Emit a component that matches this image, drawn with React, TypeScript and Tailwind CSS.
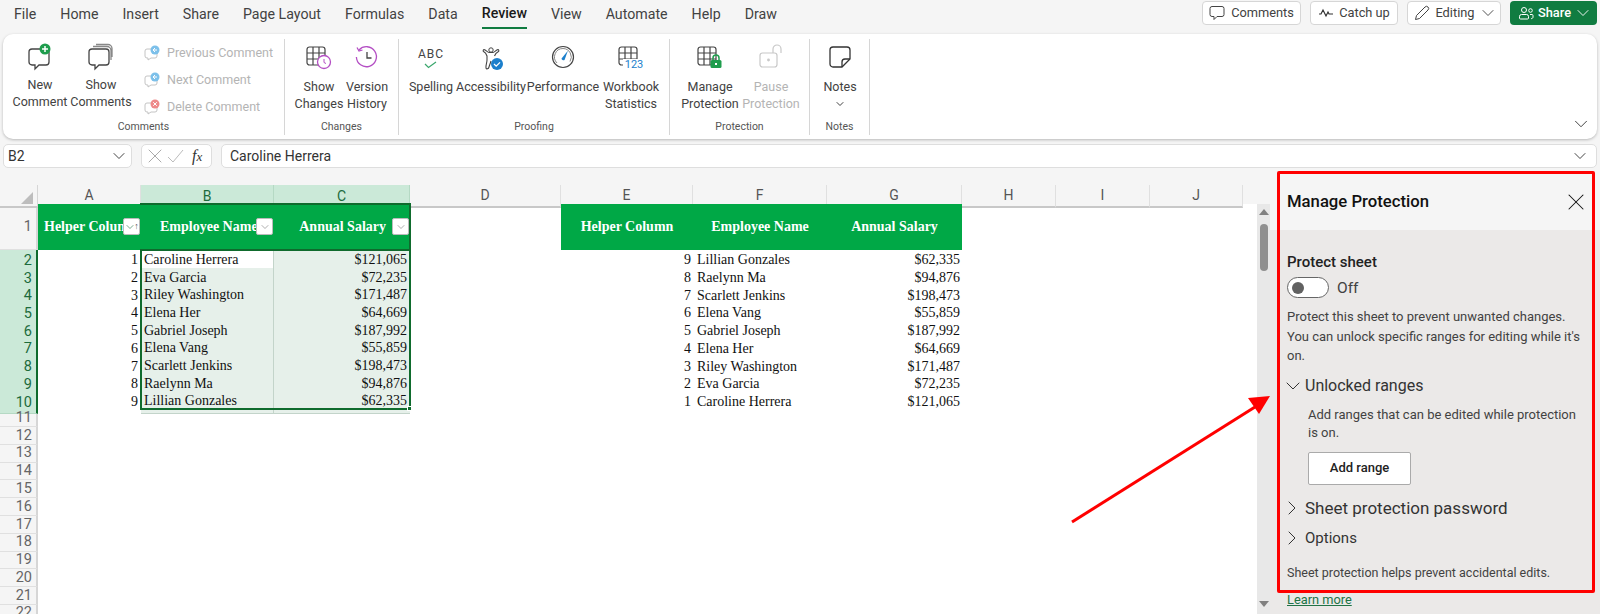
import type { ReactNode } from "react";
import { ChevronDown, ChevronRight, X } from "lucide-react";

const tabs = ["File", "Home", "Insert", "Share", "Page Layout", "Formulas", "Data", "Review", "View", "Automate", "Help", "Draw"];

const colHeaders = [
  { label: "A", sel: false },
  { label: "B", sel: true },
  { label: "C", sel: true },
  { label: "D", sel: false },
  { label: "E", sel: false },
  { label: "F", sel: false },
  { label: "G", sel: false },
  { label: "H", sel: false },
  { label: "I", sel: false },
  { label: "J", sel: false },
];

const people = [
  { id: 1, name: "Caroline Herrera", salary: "$121,065" },
  { id: 2, name: "Eva Garcia", salary: "$72,235" },
  { id: 3, name: "Riley Washington", salary: "$171,487" },
  { id: 4, name: "Elena Her", salary: "$64,669" },
  { id: 5, name: "Gabriel Joseph", salary: "$187,992" },
  { id: 6, name: "Elena Vang", salary: "$55,859" },
  { id: 7, name: "Scarlett Jenkins", salary: "$198,473" },
  { id: 8, name: "Raelynn Ma", salary: "$94,876" },
  { id: 9, name: "Lillian Gonzales", salary: "$62,335" },
];

const emptyRows = [11, 12, 13, 14, 15, 16, 17, 18, 19, 20, 21, 22];

const bubble = "M4 6a3 3 0 0 1 3-3h14a3 3 0 0 1 3 3v10a3 3 0 0 1-3 3h-7l-4 4v-4H7a3 3 0 0 1-3-3z";

const NewCommentIcon = () => (
  <svg width="30" height="28" viewBox="0 0 30 28" fill="none">
    <path d={bubble} transform="translate(0 3)" stroke="#444" strokeWidth="1.3" />
    <circle cx="20" cy="6" r="5.5" fill="#1f9d4d" />
    <path d="M20 3v6M17 6h6" stroke="#fff" strokeWidth="1.5" />
  </svg>
);

const ShowCommentsIcon = () => (
  <svg width="30" height="28" viewBox="0 0 30 28" fill="none" stroke="#444" strokeWidth="1.3">
    <path d={bubble} transform="translate(-1 3)" />
    <path d="M7 3.5h14a4 4 0 0 1 4 4V17M10 1.5h12a4 4 0 0 1 4 4V14" stroke="#888" />
  </svg>
);

const SmallCommentIcon = ({ dot, cross }: { dot: string; cross?: boolean }) => (
  <svg width="18" height="16" viewBox="0 0 18 16" fill="none">
    <path d="M1 6a2 2 0 0 1 2-2h8a2 2 0 0 1 2 2v5a2 2 0 0 1-2 2H7l-3 2v-2H3a2 2 0 0 1-2-2z" stroke="#c4c4c4" />
    <circle cx="11" cy="5" r="4.5" fill={dot} />
    {cross ? (
      <path d="M9.2 3.2l3.6 3.6M12.8 3.2l-3.6 3.6" stroke="#fff" />
    ) : (
      <path d="M13 5H9M11 3L9 5l2 2" stroke="#fff" />
    )}
  </svg>
);

const GridShape = ({ stroke = "#444" }: { stroke?: string }) => (
  <g stroke={stroke} strokeWidth="1.2" fill="none">
    <rect x="2" y="3" width="18" height="18" rx="2.5" />
    <path d="M2 9h18M2 15h18M8 3v18M14 3v18" />
  </g>
);

const ShowChangesIcon = () => (
  <svg width="28" height="26" viewBox="0 0 28 26" fill="none">
    <GridShape />
    <circle cx="19" cy="18" r="6.5" fill="#fff" stroke="#b44fc4" strokeWidth="1.3" />
    <path d="M19 15v3.5l2 1" stroke="#b44fc4" />
  </svg>
);

const HistoryIcon = () => (
  <svg width="26" height="26" viewBox="0 0 26 26" fill="none" stroke="#b44fc4" strokeWidth="1.3">
    <path d="M5 6a10 10 0 1 1-2.6 7" />
    <path d="M3 3.5L5 7l3.5-1" />
    <path d="M13 8v6h4.5" stroke="#444" />
  </svg>
);

const SpellingIcon = () => (
  <svg width="30" height="26" viewBox="0 0 30 26" fill="none">
    <path d="M9 20l3.500 3.500L20 18" stroke="#3aa76d" strokeWidth="1.2" />
    <text x="15" y="14" textAnchor="middle" fontSize="12" letterSpacing="1" fill="#444" fontFamily="Roboto, sans-serif">ABC</text>
  </svg>
);

const AccessibilityIcon = () => (
  <svg width="26" height="26" viewBox="0 0 26 26" fill="none">
    <circle cx="13" cy="6" r="2.200" stroke="#444" />
    <path
      d="M6 5.500c2 .5 3.500 3 5 3h4c1.500 0 3-2.500 5-3 1 .5 1 1.500.5 2-2 1-3.500 3-4 4.500M6 5.500c-1 .5-1 1.500-.5 2 2 1 3 3 3.500 4.500v4c0 3-1.500 5-1 8 .5 1.500 2.500 1 3-1 .5-2 1.500-4 2-6"
      stroke="#444"
      strokeWidth="1.100"
    />
    <circle cx="19" cy="20" r="6" fill="#1b7fcc" />
    <path d="M16 20l2.200 2.200 3.800-3.800" stroke="#fff" strokeWidth="1.300" />
  </svg>
);

const PerformanceIcon = () => (
  <svg width="26" height="26" viewBox="0 0 26 26" fill="none">
    <circle cx="13" cy="13" r="10.500" stroke="#444" strokeWidth="1.200" />
    <path d="M7 19a8.500 8.500 0 0 1 6-14.500 8.500 8.500 0 0 1 7 13" stroke="#888" />
    <path d="M11.500 14.500L18 6.500l-3.500 9.500a2 2 0 0 1-3-1.500z" fill="#1b7fcc" />
  </svg>
);

const StatsIcon = () => (
  <svg width="28" height="26" viewBox="0 0 28 26" fill="none">
    <GridShape />
    <rect x="6" y="15" width="22" height="10" fill="#fff" />
    <text x="17" y="24" textAnchor="middle" fontSize="11" fill="#1b7fcc" fontFamily="Roboto, sans-serif">123</text>
  </svg>
);

const ManageIcon = () => (
  <svg width="28" height="26" viewBox="0 0 28 26" fill="none">
    <GridShape />
    <path d="M17 16v-2a3 3 0 0 1 6 0v2" stroke="#1f9d4d" strokeWidth="1.500" />
    <rect x="14.500" y="16" width="11" height="8" rx="1.500" fill="#1f9d4d" />
    <rect x="19" y="19" width="2" height="2" fill="#fff" />
  </svg>
);

const PauseIcon = () => (
  <svg width="26" height="26" viewBox="0 0 26 26" fill="none" stroke="#c8c8c8" strokeWidth="1.200">
    <rect x="2" y="9" width="17" height="14" rx="2.500" />
    <path d="M15 9V5a4 4 0 0 1 8 0v4" />
    <circle cx="10.500" cy="16" r="0.800" fill="#c8c8c8" />
  </svg>
);

const NotesIcon = () => (
  <svg width="24" height="26" viewBox="0 0 24 26" fill="none" stroke="#333" strokeWidth="1.300">
    <path d="M5 3h14a3 3 0 0 1 3 3v9l-8 8H5a3 3 0 0 1-3-3V6a3 3 0 0 1 3-3z" />
    <path d="M22 15h-5a3 3 0 0 0-3 3v5" />
  </svg>
);

// lucide chevrons fill only half their box, so the big size is pulled in with margins
const Chev = ({ className = "" }: { className?: string }) => (
  <ChevronDown size={20} strokeWidth={1.100} className={`-mx-[4px] shrink-0 ${className}`} />
);

const RibbonBtn = ({ w, icon, lines, muted, up }: { w: string; icon: ReactNode; lines: ReactNode[]; muted?: boolean; up?: boolean }) => (
  <div className={`flex flex-col items-center ${w} ${muted ? "text-[#b4b4b4]" : "text-[#424242]"}`}>
    <div className="h-[26px] flex items-center justify-center">{icon}</div>
    <div className={`text-[12.500px] leading-[17px] text-center whitespace-nowrap ${up ? "mt-[6px]" : "mt-[8px]"}`}>
      {lines.map((line, i) => (
        <div key={i}>{line}</div>
      ))}
    </div>
  </div>
);

const RibbonGroup = ({ w, pad, label, children }: { w: string; pad: string; label: string; children: ReactNode }) => (
  <div className={`flex flex-col h-[96px] mt-[5px] border-r border-[#d6d6d6] ${w}`}>
    <div className={`flex pt-[5px] ${pad}`}>{children}</div>
    <div className="mt-auto h-[17px] text-[10.500px] leading-[17px] text-center text-[#555]">{label}</div>
  </div>
);

const RowHeader = ({ n, sel }: { n: number; sel?: boolean }) => (
  <div className={`h-full border-r-2 border-b flex items-center justify-end pr-[4px] text-[14.500px] ${sel ? "bg-[#cbe9d8] border-b-[#b5d9c4] border-r-[#0f6b2d] text-[#1c6b3c]" : "bg-[#f5f5f5] border-b-[#e0e0e0] border-r-[#d6d6d6] text-[#666]"}`}>
    {n}
  </div>
);

const FilterBtn = ({ sorted }: { sorted?: boolean }) => (
  <div className="absolute right-[1px] top-[14px] w-[17px] h-[17px] bg-white rounded-[2px] border border-[#bbb] flex items-center justify-center text-[#777]">
    <ChevronDown size={12} strokeWidth={1.200} className={sorted ? "text-[#1c6b3c] -mr-[2px]" : ""} />
    {sorted && <span className="text-[9px] leading-none text-[#555]">↑</span>}
  </div>
);

const HeaderCell = ({ children, align }: { children: ReactNode; align: string }) => (
  <div className={`relative h-full bg-[#00a846] flex items-center pb-[2px] overflow-hidden whitespace-nowrap font-bold text-white text-[14px] ${align}`}>
    {children}
  </div>
);

const cell = "flex items-center pb-[3px] whitespace-nowrap overflow-hidden text-[14px] text-[#111] h-full";

export default function App() {
  return (
    <div className="relative w-[1600px] h-[614px] overflow-hidden bg-[#f5f5f5] font-['Roboto',sans-serif] flex flex-col">
      {/* Tabs and top-right buttons */}
      <div className="h-[34px] flex shrink-0 justify-between">
        <div className="flex gap-[24px] pl-[14px] text-[14.200px] text-[#424242]">
          {tabs.map((t) => (
            <div key={t} className={`h-[29px] flex items-center pt-[1px] ${t === "Review" ? "border-b-2 border-[#107c41] font-medium text-[#1a1a1a]" : ""}`}>
              {t}
            </div>
          ))}
        </div>
        <div className="flex gap-[9px] pt-[1px] pr-[3px] text-[12.800px] text-[#424242]">
          <div className="w-[99px] h-[24px] bg-white border border-[#d6d6d6] rounded-[4px] flex items-center justify-center gap-[6px]">
            <svg width="16" height="16" viewBox="0 0 16 16" fill="none" stroke="#444">
              <path d="M3 1.500h10a2 2 0 0 1 2 2v6a2 2 0 0 1-2 2H8l-3 3v-3H3a2 2 0 0 1-2-2v-6a2 2 0 0 1 2-2z" />
            </svg>
            Comments
          </div>
          <div className="w-[88px] h-[24px] bg-white border border-[#d6d6d6] rounded-[4px] flex items-center justify-center gap-[5px]">
            <svg width="16" height="10" viewBox="0 0 16 10" fill="none" stroke="#333" strokeWidth="1.200">
              <path d="M1 6h2l2-4 3 6 2-4 1 2h4" />
            </svg>
            Catch up
          </div>
          <div className="w-[94px] h-[24px] bg-white border border-[#d6d6d6] rounded-[4px] flex items-center justify-center gap-[5px]">
            <svg width="16" height="16" viewBox="0 0 16 16" fill="none" stroke="#444">
              <path d="M1.500 14.500l1-4L11 2a1.800 1.800 0 0 1 3 3l-8.500 8.500z" />
            </svg>
            Editing
            <Chev className="ml-[-2px]" />
          </div>
          <div className="w-[87px] h-[24px] bg-[#107c41] rounded-[4px] flex items-center justify-center gap-[4px] text-white font-medium">
            <svg width="16" height="16" viewBox="0 0 16 16" fill="none" stroke="#fff">
              <circle cx="6" cy="5" r="2.500" />
              <circle cx="12.500" cy="5.500" r="1.800" />
              <path d="M1.500 13v-1.500a2 2 0 0 1 2-2h5a2 2 0 0 1 2 2V13a1 1 0 0 1-1 1h-7a1 1 0 0 1-1-1zM12 9.500h2a1 1 0 0 1 1 1V12a1.500 1.500 0 0 1-2 1.500" />
            </svg>
            Share
            <Chev className="ml-[-2px]" />
          </div>
        </div>
      </div>

      {/* Ribbon */}
      <div className="mx-[3px] h-[105px] shrink-0 bg-white rounded-[10px] shadow-[0_1px_3px_rgba(0,0,0,0.25)] flex">
        <RibbonGroup w="w-[282px]" pad="pl-[7px]" label="Comments">
          <RibbonBtn w="w-[60px]" up icon={<NewCommentIcon />} lines={["New", "Comment"]} />
          <RibbonBtn w="w-[62px]" up icon={<ShowCommentsIcon />} lines={["Show", "Comments"]} />
          <div className="ml-[12px] flex flex-col gap-[9px] text-[12.500px] leading-[18px] text-[#b4b4b4] whitespace-nowrap">
            <div className="flex items-center gap-[5px]">
              <SmallCommentIcon dot="#7cc0ea" />
              Previous Comment
            </div>
            <div className="flex items-center gap-[5px]">
              <SmallCommentIcon dot="#7cc0ea" />
              Next Comment
            </div>
            <div className="flex items-center gap-[5px]">
              <SmallCommentIcon dot="#ee8a8a" cross />
              Delete Comment
            </div>
          </div>
        </RibbonGroup>
        <RibbonGroup w="w-[114px]" pad="pl-[10px]" label="Changes">
          <RibbonBtn w="w-[48px]" icon={<ShowChangesIcon />} lines={["Show", "Changes"]} />
          <RibbonBtn w="w-[48px]" icon={<HistoryIcon />} lines={["Version", "History"]} />
        </RibbonGroup>
        <RibbonGroup w="w-[271px]" pad="pl-[9px]" label="Proofing">
          <RibbonBtn w="w-[46px]" icon={<SpellingIcon />} lines={["Spelling"]} />
          <RibbonBtn w="w-[74px]" icon={<AccessibilityIcon />} lines={["Accessibility"]} />
          <RibbonBtn w="w-[70px]" icon={<PerformanceIcon />} lines={["Performance"]} />
          <RibbonBtn w="w-[66px]" icon={<StatsIcon />} lines={["Workbook", "Statistics"]} />
        </RibbonGroup>
        <RibbonGroup w="w-[140px]" pad="pl-[10px]" label="Protection">
          <RibbonBtn w="w-[60px]" icon={<ManageIcon />} lines={["Manage", "Protection"]} />
          <RibbonBtn w="w-[62px]" muted icon={<PauseIcon />} lines={["Pause", "Protection"]} />
        </RibbonGroup>
        <RibbonGroup w="w-[60px]" pad="pl-[10px]" label="Notes">
          <RibbonBtn w="w-[40px]" icon={<NotesIcon />} lines={["Notes", <ChevronDown key="c" size={12} className="mx-auto mt-[3px]" />]} />
        </RibbonGroup>
        <div className="ml-auto self-end mb-[4px] mr-[5px] text-[#333]">
          <ChevronDown size={22} strokeWidth={1} />
        </div>
      </div>

      {/* Formula bar */}
      <div className="mt-[5px] mx-[3px] h-[24px] shrink-0 flex text-[14px] text-[#333]">
        <div className="w-[129px] bg-white border border-[#dedede] rounded-[5px] flex items-center justify-between pl-[4px] pr-[6px]">
          B2
          <Chev />
        </div>
        <div className="ml-[9px] w-[71px] bg-white border border-[#dedede] rounded-[5px] flex items-center pl-[1px]">
          <X size={24} strokeWidth={1} className="text-[#aaa] shrink-0" />
          <svg width="17" height="14" viewBox="0 0 17 14" fill="none" stroke="#bbb" className="shrink-0">
            <path d="M1 8l5 5L16 1" />
          </svg>
          <span className="font-['Liberation_Serif',serif] italic text-[16px] text-[#333] ml-[8px]">
            f<span className="text-[13px]">x</span>
          </span>
        </div>
        <div className="ml-[9px] flex-1 bg-white border border-[#dedede] rounded-[5px] flex items-center justify-between pl-[8px] pr-[10px]">
          Caroline Herrera
          <Chev />
        </div>
      </div>

      <div className="flex flex-1 min-h-0">
        {/* Sheet */}
        <div className="w-[1257px] shrink-0 pt-[17px]">
          <div className="relative">
            <div className="grid grid-cols-[38px_103px_133px_136px_151px_132px_134px_135px_94px_94px_93px_14px] h-[19px] text-[14px] text-[#555]">
              <div className="relative bg-[#f5f5f5] border-r border-[#d6d6d6] border-b-2 border-b-[#c8c8c8]">
                <div className="absolute right-[4px] bottom-[2px] w-0 h-0 border-l-[12px] border-l-transparent border-b-[12px] border-b-[#bdbdbd]" />
              </div>
              {colHeaders.map((c) => (
                <div key={c.label} className={`flex items-center justify-center border-r ${c.sel ? "bg-[#cbe9d8] border-[#b5d9c4] text-[#1c6b3c]" : "bg-[#f5f5f5] border-[#e0e0e0] border-b-2 border-b-[#c8c8c8]"}`}>
                  {c.label}
                </div>
              ))}
              <div />
            </div>

            <div className="bg-white font-['Liberation_Serif',serif]">
              <div className="grid grid-cols-[38px_103px_133px_136px_151px_132px_134px_135px] h-[46px]">
                <div className="font-['Roboto',sans-serif]">
                  <RowHeader n={1} />
                </div>
                <HeaderCell align="pl-[6px]">
                  Helper Column
                  <FilterBtn sorted />
                </HeaderCell>
                <HeaderCell align="pl-[19px]">
                  Employee Name
                  <FilterBtn />
                </HeaderCell>
                <HeaderCell align="justify-end pr-[24px]">
                  Annual Salary
                  <FilterBtn />
                </HeaderCell>
                <div />
                <HeaderCell align="justify-center">Helper Column</HeaderCell>
                <HeaderCell align="justify-center">Employee Name</HeaderCell>
                <HeaderCell align="justify-center">Annual Salary</HeaderCell>
              </div>

              {people.map((p, i) => {
                const other = people[people.length - 1 - i];
                return (
                  <div key={p.id} className="grid grid-cols-[38px_103px_133px_136px_151px_132px_134px_135px] h-[17.700px]">
                    <div className="font-['Roboto',sans-serif]">
                      <RowHeader n={i + 2} sel />
                    </div>
                    <div className={`${cell} justify-end pr-[3px]`}>{p.id}</div>
                    <div className={`${cell} pl-[3px] border-r border-b border-[#c3d4ca] ${i === 0 ? "bg-white" : "bg-[#e6f0ea]"}`}>{p.name}</div>
                    <div className={`${cell} justify-end pr-[3px] border-b border-[#c3d4ca] bg-[#e6f0ea]`}>{p.salary}</div>
                    <div />
                    <div className={`${cell} justify-end pr-[2px]`}>{other.id}</div>
                    <div className={`${cell} pl-[4px]`}>{other.name}</div>
                    <div className={`${cell} justify-end pr-[2px]`}>{other.salary}</div>
                  </div>
                );
              })}

              <div className="font-['Roboto',sans-serif]">
                {emptyRows.map((n) => (
                  <div key={n} className="w-[38px] h-[17.800px]">
                    <RowHeader n={n} />
                  </div>
                ))}
              </div>
            </div>

            {/* Selection box over B:C */}
            <div className="absolute left-[140px] top-[18px] w-[271px] h-[46px] border-t-2 border-r-2 border-[#0f6b2d] pointer-events-none" />
            <div className="absolute left-[140px] top-[64px] w-[271px] h-[161px] border-2 border-[#0f6b2d] pointer-events-none">
              <div className="absolute -right-[3px] -bottom-[3px] w-[5px] h-[5px] bg-[#0f6b2d] border border-white" />
            </div>
          </div>
        </div>

        {/* Scrollbar */}
        <div className="w-[13px] shrink-0 mt-[36px] bg-[#e8e8e8] flex flex-col items-center">
          <div className="mt-[5px] w-0 h-0 border-l-[5px] border-r-[5px] border-b-[6px] border-l-transparent border-r-transparent border-b-[#808080]" />
          <div className="mt-[9px] w-[8px] h-[47px] rounded-full bg-[#8f8f8f]" />
          <div className="mt-auto mb-[7px] w-0 h-0 border-l-[5px] border-r-[5px] border-t-[6px] border-l-transparent border-r-transparent border-t-[#808080]" />
        </div>

        {/* Manage Protection pane */}
        <div className="w-[330px] shrink-0 flex flex-col bg-[#ebe9e8]">
          <div className="h-[62px] shrink-0 bg-[#f5f5f5] pl-[17px] pr-[10px] pt-[6px] flex items-center justify-between text-[16.700px] font-medium text-[#111]">
            Manage Protection
            <X size={28} strokeWidth={0.900} />
          </div>
          <div className="pl-[17px] pr-[10px] text-[#424242]">
            <div className="mt-[22px] text-[15px] leading-[20px] font-medium text-[#222]">Protect sheet</div>
            <div className="mt-[5px] flex items-center gap-[8px] text-[15.500px] leading-[20px]">
              <div className="w-[42px] h-[21px] rounded-full border border-[#666] bg-white flex items-center pl-[4px]">
                <div className="w-[12px] h-[12px] rounded-full bg-[#616161]" />
              </div>
              Off
            </div>
            <p className="mt-[9px] text-[13px] leading-[19.500px] whitespace-nowrap">
              Protect this sheet to prevent unwanted changes.
              <br />
              You can unlock specific ranges for editing while it's
              <br />
              on.
            </p>
            <div className="mt-[8px] flex items-center text-[16px] leading-[20px] text-[#333]">
              <ChevronDown size={24} strokeWidth={1} className="-mx-[6px] shrink-0" />
              <span className="ml-[6px]">Unlocked ranges</span>
            </div>
            <p className="mt-[8px] pl-[21px] text-[13px] leading-[18.500px] whitespace-nowrap">
              Add ranges that can be edited while protection
              <br />
              is on.
            </p>
            <div className="mt-[9px] ml-[21px] w-[103px] h-[33px] bg-white border border-[#aaa] rounded-[2px] flex items-center justify-center text-[13px] font-medium text-[#222]">
              Add range
            </div>
            <div className="mt-[11px] flex items-center text-[17px] leading-[20px] text-[#333]">
              <ChevronRight size={24} strokeWidth={1} className="-ml-[7px] -mr-[5px] shrink-0" />
              <span className="ml-[6px]">Sheet protection password</span>
            </div>
            <div className="mt-[6px] flex items-center text-[15px] leading-[20px] text-[#333]">
              <ChevronRight size={24} strokeWidth={1} className="-ml-[7px] -mr-[5px] shrink-0" />
              <span className="ml-[6px]">Options</span>
            </div>
            <p className="mt-[13px] text-[12.500px] leading-[19px] whitespace-nowrap">Sheet protection helps prevent accidental edits.</p>
            <p className="mt-[8px] text-[12.800px] leading-[19px] text-[#217346] underline">Learn more</p>
          </div>
        </div>
      </div>

      {/* Red annotation over the screenshot */}
      <div className="absolute left-[1277px] top-[171px] w-[318px] h-[422px] border-[3px] border-[#f00] rounded-[2px] pointer-events-none" />
      <svg className="absolute left-[1060px] top-[385px] pointer-events-none" width="220" height="145" viewBox="0 0 220 145" fill="none">
        <path d="M12 137L195 22" stroke="#f00" strokeWidth="3" />
        <path d="M210 11L199 29 188 13z" fill="#f00" />
      </svg>
    </div>
  );
}
